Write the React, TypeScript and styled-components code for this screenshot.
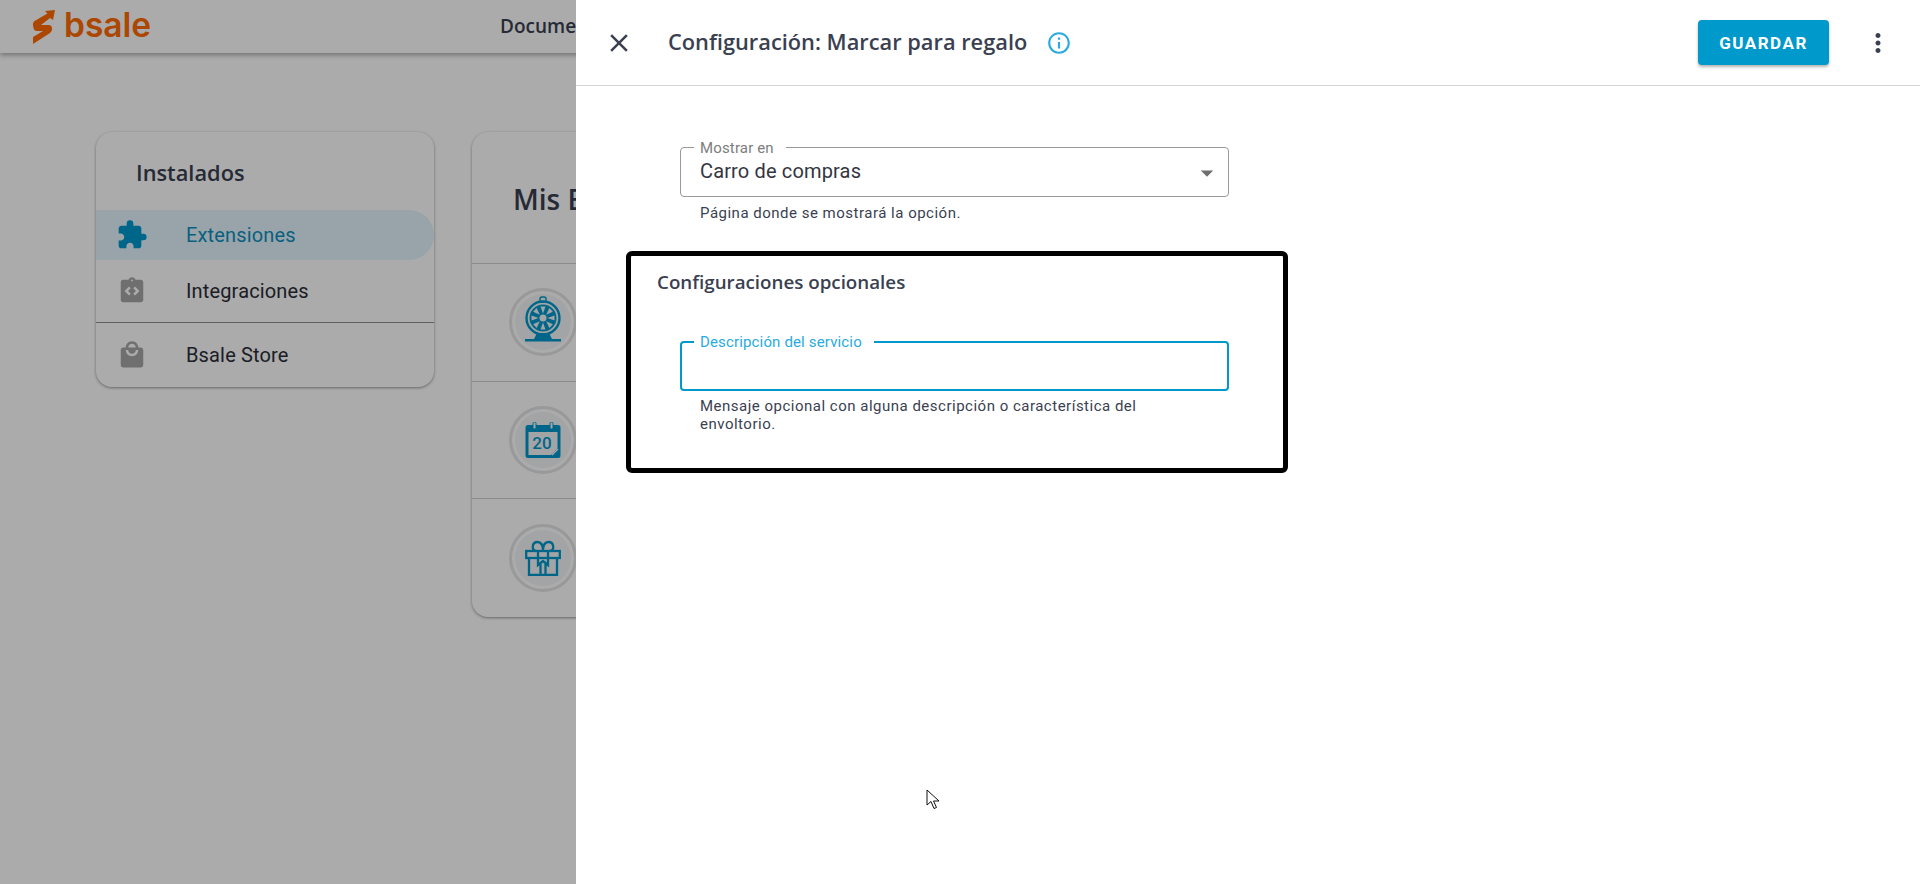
import { FC } from "react";
import styled, { createGlobalStyle } from "styled-components";
import {
  MdClose,
  MdExtension,
  MdIntegrationInstructions,
  MdLocalMall,
  MdMoreVert,
  MdOutlineInfo,
  MdArrowDropDown,
} from "react-icons/md";

const GlobalStyle = createGlobalStyle`
  html, body {
    margin: 0;
    padding: 0;
    height: 100%;
    overflow: hidden;
    background: #fff;
    font-family: "Roboto", "Liberation Sans", sans-serif;
  }
  * { box-sizing: border-box; }
`;

const Page = styled.div`
  width: 1920px;
  height: 884px;
  overflow: hidden;
`;

const AppBar = styled.header`
  height: 53px;
  display: flex;
  align-items: center;
  padding-left: 33px;
  background: #fff;
  box-shadow: 0 2px 5px rgba(0, 0, 0, 0.35);
`;

const Logo = styled.div`
  display: flex;
  align-items: center;
  gap: 7px;
  width: 467px;
`;

const LogoText = styled.span`
  font-family: "Inter", sans-serif;
  font-size: 33.5px;
  font-weight: 600;
  line-height: 1;
  color: #ff6a00;
  margin-top: -1px;
`;

const NavLink = styled.span`
  font-family: "Open Sans", sans-serif;
  font-size: 19px;
  font-weight: 600;
  color: #3a3f51;
  margin-top: -1px;
`;

const Content = styled.main`
  display: flex;
  align-items: flex-start;
  gap: 38px;
  padding: 79px 0 0 96px;
`;

const Card = styled.section`
  background: #fff;
  border-radius: 16px;
  box-shadow: 0 1px 3px rgba(0, 0, 0, 0.4);
`;

const Sidebar = styled(Card)`
  width: 338px;
  height: 255px;
`;

const SidebarTitle = styled.h2`
  margin: 0;
  height: 78px;
  padding: 27px 0 0 40px;
  font-family: "Open Sans", sans-serif;
  font-size: 21.8px;
  font-weight: 600;
  line-height: 28px;
  color: #3a3f51;
`;

const NavItem = styled.div<{ $active?: boolean; $height: number; $ruled?: boolean }>`
  display: flex;
  align-items: center;
  height: ${(p) => p.$height}px;
  padding-left: 20px;
  gap: 38px;
  border-radius: ${(p) => (p.$active ? "0 25px 25px 0" : "0")};
  border-bottom: ${(p) => (p.$ruled ? "1px solid #8f8f8f" : "0")};
  font-size: 20px;
  letter-spacing: 0.15px;
  color: ${(p) => (p.$active ? "#0f90bd" : "#2a2d38")};
  background: ${(p) => (p.$active ? "#e3f5fe" : "transparent")};
`;

const NavIcon = styled.span<{ $size: number; $active?: boolean }>`
  width: 32px;
  flex: none;
  display: flex;
  justify-content: center;
  color: ${(p) => (p.$active ? "#0099cc" : "#a6a6a6")};

  svg {
    width: ${(p) => p.$size}px;
    height: ${(p) => p.$size}px;
  }
`;

const MainCard = styled(Card)`
  width: 900px;
  height: 485px;
`;

const MainTitle = styled.h1`
  margin: 0;
  height: 132px;
  padding: 48px 0 0 41px;
  font-family: "Open Sans", sans-serif;
  font-size: 28px;
  font-weight: 600;
  line-height: 38px;
  color: #3a3f51;
  border-bottom: 1px solid #d0d0d0;
`;

const ExtensionRow = styled.div<{ $last?: boolean }>`
  height: 117.5px;
  display: flex;
  align-items: center;
  padding-left: 37px;
  border-bottom: ${(p) => (p.$last ? "0" : "1px solid #d0d0d0")};
`;

const IconRing = styled.div`
  width: 68px;
  height: 68px;
  border-radius: 50%;
  border: 3px solid #e5e5e5;
  background: #f3f5f7;
  box-shadow: inset 0 0 0 3px #fff;
  display: flex;
  align-items: center;
  justify-content: center;
  color: #0099cc;
`;

const WheelSvg = styled.svg`
  margin-top: -6px;
`;

const Backdrop = styled.div`
  position: fixed;
  inset: 0;
  background: rgba(0, 0, 0, 0.33);
`;

const Drawer = styled.aside`
  position: fixed;
  top: 0;
  right: 0;
  bottom: 0;
  width: 1344px;
  background: #fff;
`;

const DrawerHeader = styled.div`
  height: 86px;
  display: flex;
  align-items: center;
  padding: 0 27px 0 28px;
  border-bottom: 1px solid #d4d4d4;
`;

const CloseButton = styled.div`
  width: 30px;
  height: 30px;
  color: #3a3f51;
  display: flex;
  margin-right: 34px;

  svg {
    width: 30px;
    height: 30px;
  }
`;

const DrawerTitle = styled.h1`
  margin: -1px 0 0;
  font-family: "Open Sans", sans-serif;
  font-size: 21.8px;
  font-weight: 600;
  line-height: 28px;
  color: #3a3f51;
`;

const InfoIcon = styled.div`
  display: flex;
  margin-left: 19px;
  color: #29abe2;

  svg {
    width: 26px;
    height: 26px;
  }
`;

const SaveButton = styled.button`
  margin: 0 2px 0 auto;
  width: 131px;
  height: 45px;
  border: 0;
  border-radius: 4px;
  background: #0099cc;
  color: #fff;
  font-family: "Roboto", sans-serif;
  font-size: 17px;
  font-weight: 700;
  letter-spacing: 1.5px;
  box-shadow: 0 2px 3px rgba(0, 0, 0, 0.3);
`;

const MoreButton = styled.div`
  display: flex;
  margin-left: 32px;
  color: #3a3f51;

  svg {
    width: 30px;
    height: 30px;
  }
`;

const DrawerBody = styled.div`
  padding: 61px 0 0 104px;
`;

const FieldWrap = styled.div`
  width: 549px;
`;

const FieldBox = styled.fieldset<{ $focused?: boolean }>`
  margin: -7px 0 0;
  padding: 0 16px 0 ${(p) => (p.$focused ? 13 : 14)}px;
  height: 57px;
  border: ${(p) => (p.$focused ? "2px solid #0099cc" : "1px solid #9a9a9a")};
  border-radius: 4px;
  display: flex;
  align-items: center;
  justify-content: space-between;
`;

const FieldLegend = styled.legend`
  padding: 2px 12px 0 6px;
  margin-left: -1px;
  font-size: 15px;
  line-height: 13px;
  letter-spacing: 0.15px;
`;

const GreyLegend = styled(FieldLegend)`
  color: #7d7d7d;
`;

const BlueLegend = styled(FieldLegend)`
  color: #29abe2;
`;

const FieldValue = styled.span`
  font-size: 20px;
  letter-spacing: 0.15px;
  color: #33363f;
  margin: -9px 0 0 5px;
`;

const DropArrow = styled.div`
  display: flex;
  color: #6f6f6f;
  margin: -5px -10px 0 0;

  svg {
    width: 30px;
    height: 30px;
  }
`;

const HelperText = styled.p`
  margin: 7px 0 0;
  padding: 0 36px 0 20px;
  font-size: 15px;
  line-height: 18px;
  letter-spacing: 0.5px;
  color: #3a3f51;
`;

const OptionalHelper = styled(HelperText)`
  margin-top: 6px;
`;

const OptionalBox = styled.div`
  width: 662px;
  height: 222px;
  margin: 29px 0 0 -54px;
  padding: 14px 0 0 26px;
  border: 5px solid #000;
  border-radius: 6px;
`;

const OptionalTitle = styled.h2`
  margin: 0 0 47px;
  font-family: "Open Sans", sans-serif;
  font-size: 18.75px;
  font-weight: 600;
  line-height: 24px;
  color: #3a3f51;
`;

const OptionalField = styled(FieldWrap)`
  margin-left: 23px;
`;

const Cursor = styled.svg`
  position: fixed;
  left: 926px;
  top: 789px;
`;

const WHEEL_SPOKES = [0, 45, 90, 135, 180, 225, 270, 315];

const WheelIcon: FC = () => (
  <WheelSvg width="36" height="46" viewBox="0 0 36 46" fill="none">
    <circle cx="18" cy="22" r="16.5" stroke="currentColor" strokeWidth="2.4" />
    <circle cx="18" cy="22" r="13.5" fill="currentColor" />
    {WHEEL_SPOKES.map((angle) => (
      <path key={angle} d="M18 17.500L15.500 10.500H20.500Z" fill="#f3f5f7" transform={`rotate(${angle} 18 22)`} />
    ))}
    <circle cx="18" cy="22" r="3.500" fill="#f3f5f7" />
    <rect x="15" y="1" width="6" height="5" rx="2" stroke="currentColor" strokeWidth="1.500" />
    <path d="M12 37h12l3 6h9v2.500H0V43h9z" fill="currentColor" />
  </WheelSvg>
);

const CalendarIcon: FC = () => (
  <svg width="36" height="36" viewBox="0 0 36 36" fill="none">
    <path
      d="M3 3h30a2.500 2.500 0 0 1 2.500 2.500v28a2.500 2.500 0 0 1-2.500 2.500H3a2.500 2.500 0 0 1-2.500-2.500v-28A2.500 2.500 0 0 1 3 3z"
      fill="currentColor"
    />
    <rect x="3.500" y="10" width="29" height="23" fill="#f3f5f7" />
    <path d="M33 26v7h-7z" fill="currentColor" />
    <path d="M27 33l6-6" stroke="#f3f5f7" strokeWidth="1.500" />
    <rect x="8" y="0" width="3" height="7" rx="1.500" fill="#f3f5f7" stroke="currentColor" strokeWidth="1" />
    <rect x="25" y="0" width="3" height="7" rx="1.500" fill="#f3f5f7" stroke="currentColor" strokeWidth="1" />
    <text
      x="17"
      y="27"
      textAnchor="middle"
      fontFamily="Roboto, sans-serif"
      fontSize="17"
      fontWeight="500"
      fill="currentColor"
    >
      20
    </text>
  </svg>
);

const GiftIcon: FC = () => (
  <svg width="36" height="36" viewBox="0 0 36 36" fill="none" stroke="currentColor" strokeWidth="2.300">
    <path d="M11 11c-5-1-4-9 1.500-9 4 0 5.500 4 5.500 9 0-5 1.500-9 5.500-9 5.500 0 6.500 8 1.500 9" />
    <rect x="1.200" y="11" width="33.600" height="7" />
    <path d="M4 18v17h28V18M13 11v14l5-4 5 4V11M15.500 24v11M20.500 24v11" />
  </svg>
);

const LogoMark: FC = () => (
  <svg width="24" height="36" viewBox="0 0 24 36">
    <path
      d="M22 1L12 2l2.500 2.500L1.500 12Q-.5 14 0 16l.5 3Q1 22 4 22h6L0 28v7l17-11q2.500-2 2-5l-.5-1.500Q18 16 16 16H8l9-7 3 2z"
      fill="#ff6a00"
    />
  </svg>
);

const App: FC = () => (
  <Page>
    <GlobalStyle />
    <AppBar>
      <Logo>
        <LogoMark />
        <LogoText>bsale</LogoText>
      </Logo>
      <NavLink>Documentación</NavLink>
    </AppBar>
    <Content>
      <Sidebar>
        <SidebarTitle>Instalados</SidebarTitle>
        <NavItem $active $height={50}>
          <NavIcon $size={32} $active>
            <MdExtension />
          </NavIcon>
          Extensiones
        </NavItem>
        <NavItem $height={63} $ruled>
          <NavIcon $size={30}>
            <MdIntegrationInstructions />
          </NavIcon>
          Integraciones
        </NavItem>
        <NavItem $height={64}>
          <NavIcon $size={30}>
            <MdLocalMall />
          </NavIcon>
          Bsale Store
        </NavItem>
      </Sidebar>
      <MainCard>
        <MainTitle>Mis Extensiones</MainTitle>
        <ExtensionRow>
          <IconRing>
            <WheelIcon />
          </IconRing>
        </ExtensionRow>
        <ExtensionRow>
          <IconRing>
            <CalendarIcon />
          </IconRing>
        </ExtensionRow>
        <ExtensionRow $last>
          <IconRing>
            <GiftIcon />
          </IconRing>
        </ExtensionRow>
      </MainCard>
    </Content>
    <Backdrop />
    <Drawer>
      <DrawerHeader>
        <CloseButton>
          <MdClose />
        </CloseButton>
        <DrawerTitle>Configuración: Marcar para regalo</DrawerTitle>
        <InfoIcon>
          <MdOutlineInfo />
        </InfoIcon>
        <SaveButton>GUARDAR</SaveButton>
        <MoreButton>
          <MdMoreVert />
        </MoreButton>
      </DrawerHeader>
      <DrawerBody>
        <FieldWrap>
          <FieldBox>
            <GreyLegend>Mostrar en</GreyLegend>
            <FieldValue>Carro de compras</FieldValue>
            <DropArrow>
              <MdArrowDropDown />
            </DropArrow>
          </FieldBox>
          <HelperText>Página donde se mostrará la opción.</HelperText>
        </FieldWrap>
        <OptionalBox>
          <OptionalTitle>Configuraciones opcionales</OptionalTitle>
          <OptionalField>
            <FieldBox $focused>
              <BlueLegend>Descripción del servicio</BlueLegend>
            </FieldBox>
            <OptionalHelper>
              Mensaje opcional con alguna descripción o característica del envoltorio.
            </OptionalHelper>
          </OptionalField>
        </OptionalBox>
      </DrawerBody>
    </Drawer>
    <Cursor width="14" height="22" viewBox="0 0 14 22">
      <path d="M1 1v15l4-3.500 3 7 2.500-1-3-6.500H13z" fill="#fff" stroke="#111" strokeWidth="1" />
    </Cursor>
  </Page>
);

export default App;
